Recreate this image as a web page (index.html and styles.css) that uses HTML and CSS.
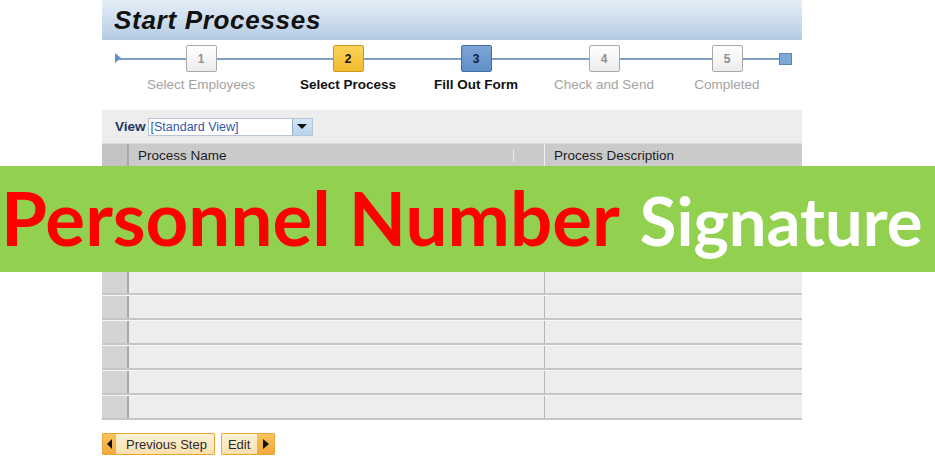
FILE: index.html
```html
<!DOCTYPE html>
<html lang="en">
<head>
<meta charset="utf-8">
<title>Start Processes</title>
<link rel="stylesheet" href="styles.css">
</head>
<body>
<div class="page">
  <div class="panel">
    <div class="titlebar"><h1 class="title">Start Processes</h1></div>

    <div class="roadmap">
      <span class="rm-start"></span>
      <div class="step s1"><div class="box">1</div><div class="label">Select Employees</div></div>
      <div class="step s2 cur"><div class="box">2</div><div class="label">Select Process</div></div>
      <div class="step s3 nxt"><div class="box">3</div><div class="label">Fill Out Form</div></div>
      <div class="step s4"><div class="box">4</div><div class="label">Check and Send</div></div>
      <div class="step s5"><div class="box">5</div><div class="label">Completed</div></div>
      <span class="rm-end"></span>
    </div>

    <div class="viewbar">
      <span class="view-label">View</span>
      <div class="select">
        <span class="select-text">[Standard View]</span>
        <span class="select-btn"><span class="caret"></span></span>
      </div>
    </div>

    <div class="table">
      <div class="thead">
        <div class="sel"></div>
        <div class="c1 th">Process Name<span class="handle"></span></div>
        <div class="c2 th">Process Description</div>
      </div>
      <div class="row"><div class="sel"></div><div class="c1"></div><div class="c2"></div></div>
      <div class="row"><div class="sel"></div><div class="c1"></div><div class="c2"></div></div>
      <div class="row"><div class="sel"></div><div class="c1"></div><div class="c2"></div></div>
      <div class="row"><div class="sel"></div><div class="c1"></div><div class="c2"></div></div>
      <div class="row"><div class="sel"></div><div class="c1"></div><div class="c2"></div></div>
      <div class="row"><div class="sel"></div><div class="c1"></div><div class="c2"></div></div>
      <div class="row"><div class="sel"></div><div class="c1"></div><div class="c2"></div></div>
      <div class="row"><div class="sel"></div><div class="c1"></div><div class="c2"></div></div>
      <div class="row"><div class="sel"></div><div class="c1"></div><div class="c2"></div></div>
      <div class="row"><div class="sel"></div><div class="c1"></div><div class="c2"></div></div>
    </div>

    <div class="actions">
      <button class="btn prev"><span class="arr arr-l"></span><span class="btxt">Previous Step</span></button>
      <button class="btn edit"><span class="btxt">Edit</span><span class="arr arr-r"></span></button>
    </div>
  </div>

  <div class="banner">
    <span class="b-red">Personnel Number</span>
    <span class="b-white">Signature</span>
  </div>
</div>
</body>
</html>
```

FILE: styles.css
```css
* { box-sizing: border-box; }

body {
  margin: 0;
  background: #ffffff;
  font-family: "Liberation Sans", Arial, sans-serif;
  color: #222;
}

.page {
  position: relative;
  width: 935px;
  height: 462px;
  overflow: hidden;
}

.panel {
  margin-left: 102px;
  width: 700px;
}

/* title bar */
.titlebar {
  height: 40px;
  display: flex;
  align-items: center;
  padding-left: 12px;
  background: linear-gradient(#e4eef8, #d0dfef 45%, #b5cbe3);
}

.title {
  margin: 0;
  font: italic bold 26px "Liberation Sans", Arial, sans-serif;
  letter-spacing: 0.7px;
  color: #111;
}

/* roadmap */
.roadmap {
  height: 70px;
  display: flex;
  align-items: flex-start;
  padding: 5px 0 0 13px;
  background-image: linear-gradient(#7e9ec6, #7e9ec6);
  background-repeat: no-repeat;
  background-size: 668px 2px;
  background-position: 15px 18px;
}

.rm-start {
  width: 0;
  height: 0;
  margin-top: 8px;
  border-left: 6px solid #5f8fcb;
  border-top: 5px solid transparent;
  border-bottom: 5px solid transparent;
}

.rm-end {
  width: 13px;
  height: 12px;
  margin-top: 8px;
  margin-left: -4px;
  background: #7fa8d8;
  border: 1px solid #5a85bb;
}

.step {
  display: flex;
  flex-direction: column;
  align-items: center;
}
.s1 { width: 160px; }
.s2 { width: 134px; }
.s3 { width: 122px; }
.s4 { width: 134px; }
.s5 { width: 112px; }

.box {
  width: 31px;
  height: 27px;
  border: 1px solid #a9a9a9;
  border-radius: 2px;
  background: linear-gradient(#ffffff, #ececec);
  display: flex;
  align-items: center;
  justify-content: center;
  font-size: 12px;
  font-weight: bold;
  color: #8f8f8f;
}
.cur .box {
  background: linear-gradient(#fbd35a, #f3bb2c);
  border-color: #c99a22;
  color: #111;
}
.nxt .box {
  background: linear-gradient(#7ea6d6, #5f8ec6);
  border-color: #406ea6;
  color: #10203c;
}

.label {
  margin-top: 5px;
  font-size: 13.5px;
  line-height: 16px;
  white-space: nowrap;
  color: #a3a3a3;
}
.cur .label, .nxt .label {
  color: #111;
  font-weight: bold;
}

/* view bar */
.viewbar {
  height: 33px;
  display: flex;
  align-items: center;
  padding-left: 13px;
  background: #ededed;
}

.view-label {
  font-size: 13.5px;
  font-weight: bold;
  color: #1d3566;
}

.select {
  margin-left: 2px;
  width: 165px;
  height: 18px;
  display: flex;
  background: #fff;
  border: 1px solid #b9c4d2;
}

.select-text {
  flex: 1;
  font-size: 12.5px;
  line-height: 16px;
  padding-left: 2px;
  color: #3557a8;
}

.select-btn {
  width: 20px;
  display: flex;
  align-items: center;
  justify-content: center;
  background: linear-gradient(#d5e6f7, #b6d2ef);
  border-left: 1px solid #93aed0;
}

.caret {
  width: 0;
  height: 0;
  border-top: 5px solid #111;
  border-left: 5px solid transparent;
  border-right: 5px solid transparent;
}

/* table */
.table {
  display: flex;
  flex-direction: column;
}

.thead {
  height: 27px;
  display: flex;
  background: #cacaca;
  border-top: 1px solid #dcdcdc;
}

.thead .sel {
  background: #c4c4c4;
}

.th {
  position: relative;
  font-size: 13.5px;
  line-height: 24px;
  padding-left: 9px;
  color: #1e1e1e;
}

.thead .c1 {
  border-right: 1px solid #f0f0f0;
}

.handle {
  position: absolute;
  left: 384px;
  top: 5px;
  width: 1px;
  height: 13px;
  background: #ededed;
}

.row {
  height: 25px;
  display: flex;
  background: #ededed;
  border-top: 1px solid #f6f6f6;
  border-bottom: 2px solid #c6c6c6;
}

.sel {
  width: 27px;
  background: #d4d4d4;
  border-right: 2px solid #a9a9a9;
}

.c1 {
  width: 416px;
  border-right: 1px solid #b4b4b4;
}

.c2 {
  flex: 1;
}

/* action buttons */
.actions {
  margin-top: 13px;
  display: flex;
  gap: 6px;
}

.btn {
  height: 22px;
  padding: 0;
  display: flex;
  align-items: stretch;
  border: 1px solid #eaa53a;
  border-radius: 1px;
  background: linear-gradient(#fff1d6, #fbe0ae);
  font: 13px "Liberation Sans", Arial, sans-serif;
  color: #2a2a2a;
}

.btxt {
  display: flex;
  align-items: center;
}
.prev .btxt { padding: 0 7px 0 10px; }
.edit .btxt { padding: 0 7px 0 6px; }

.arr {
  display: flex;
  align-items: center;
  justify-content: center;
  background: linear-gradient(#f8c35f, #f0a93a);
}
.arr-l { width: 13px; }
.arr-r { width: 17px; }

.arr-l::before {
  content: "";
  border-right: 5px solid #111;
  border-top: 5px solid transparent;
  border-bottom: 5px solid transparent;
}
.arr-r::before {
  content: "";
  border-left: 6px solid #111;
  border-top: 5px solid transparent;
  border-bottom: 5px solid transparent;
}

/* overlay banner */
.banner {
  position: absolute;
  left: 0;
  top: 166px;
  width: 935px;
  height: 106px;
  background: #92d050;
  display: flex;
  align-items: baseline;
  gap: 20px;
  padding: 14px 0 0 1px;
  font-family: Lato, "Open Sans", sans-serif;
  font-weight: bold;
  line-height: 1;
}

.b-red {
  font-size: 74.5px;
  color: #ff0000;
}

.b-white {
  font-size: 67px;
  color: #ffffff;
}
```
